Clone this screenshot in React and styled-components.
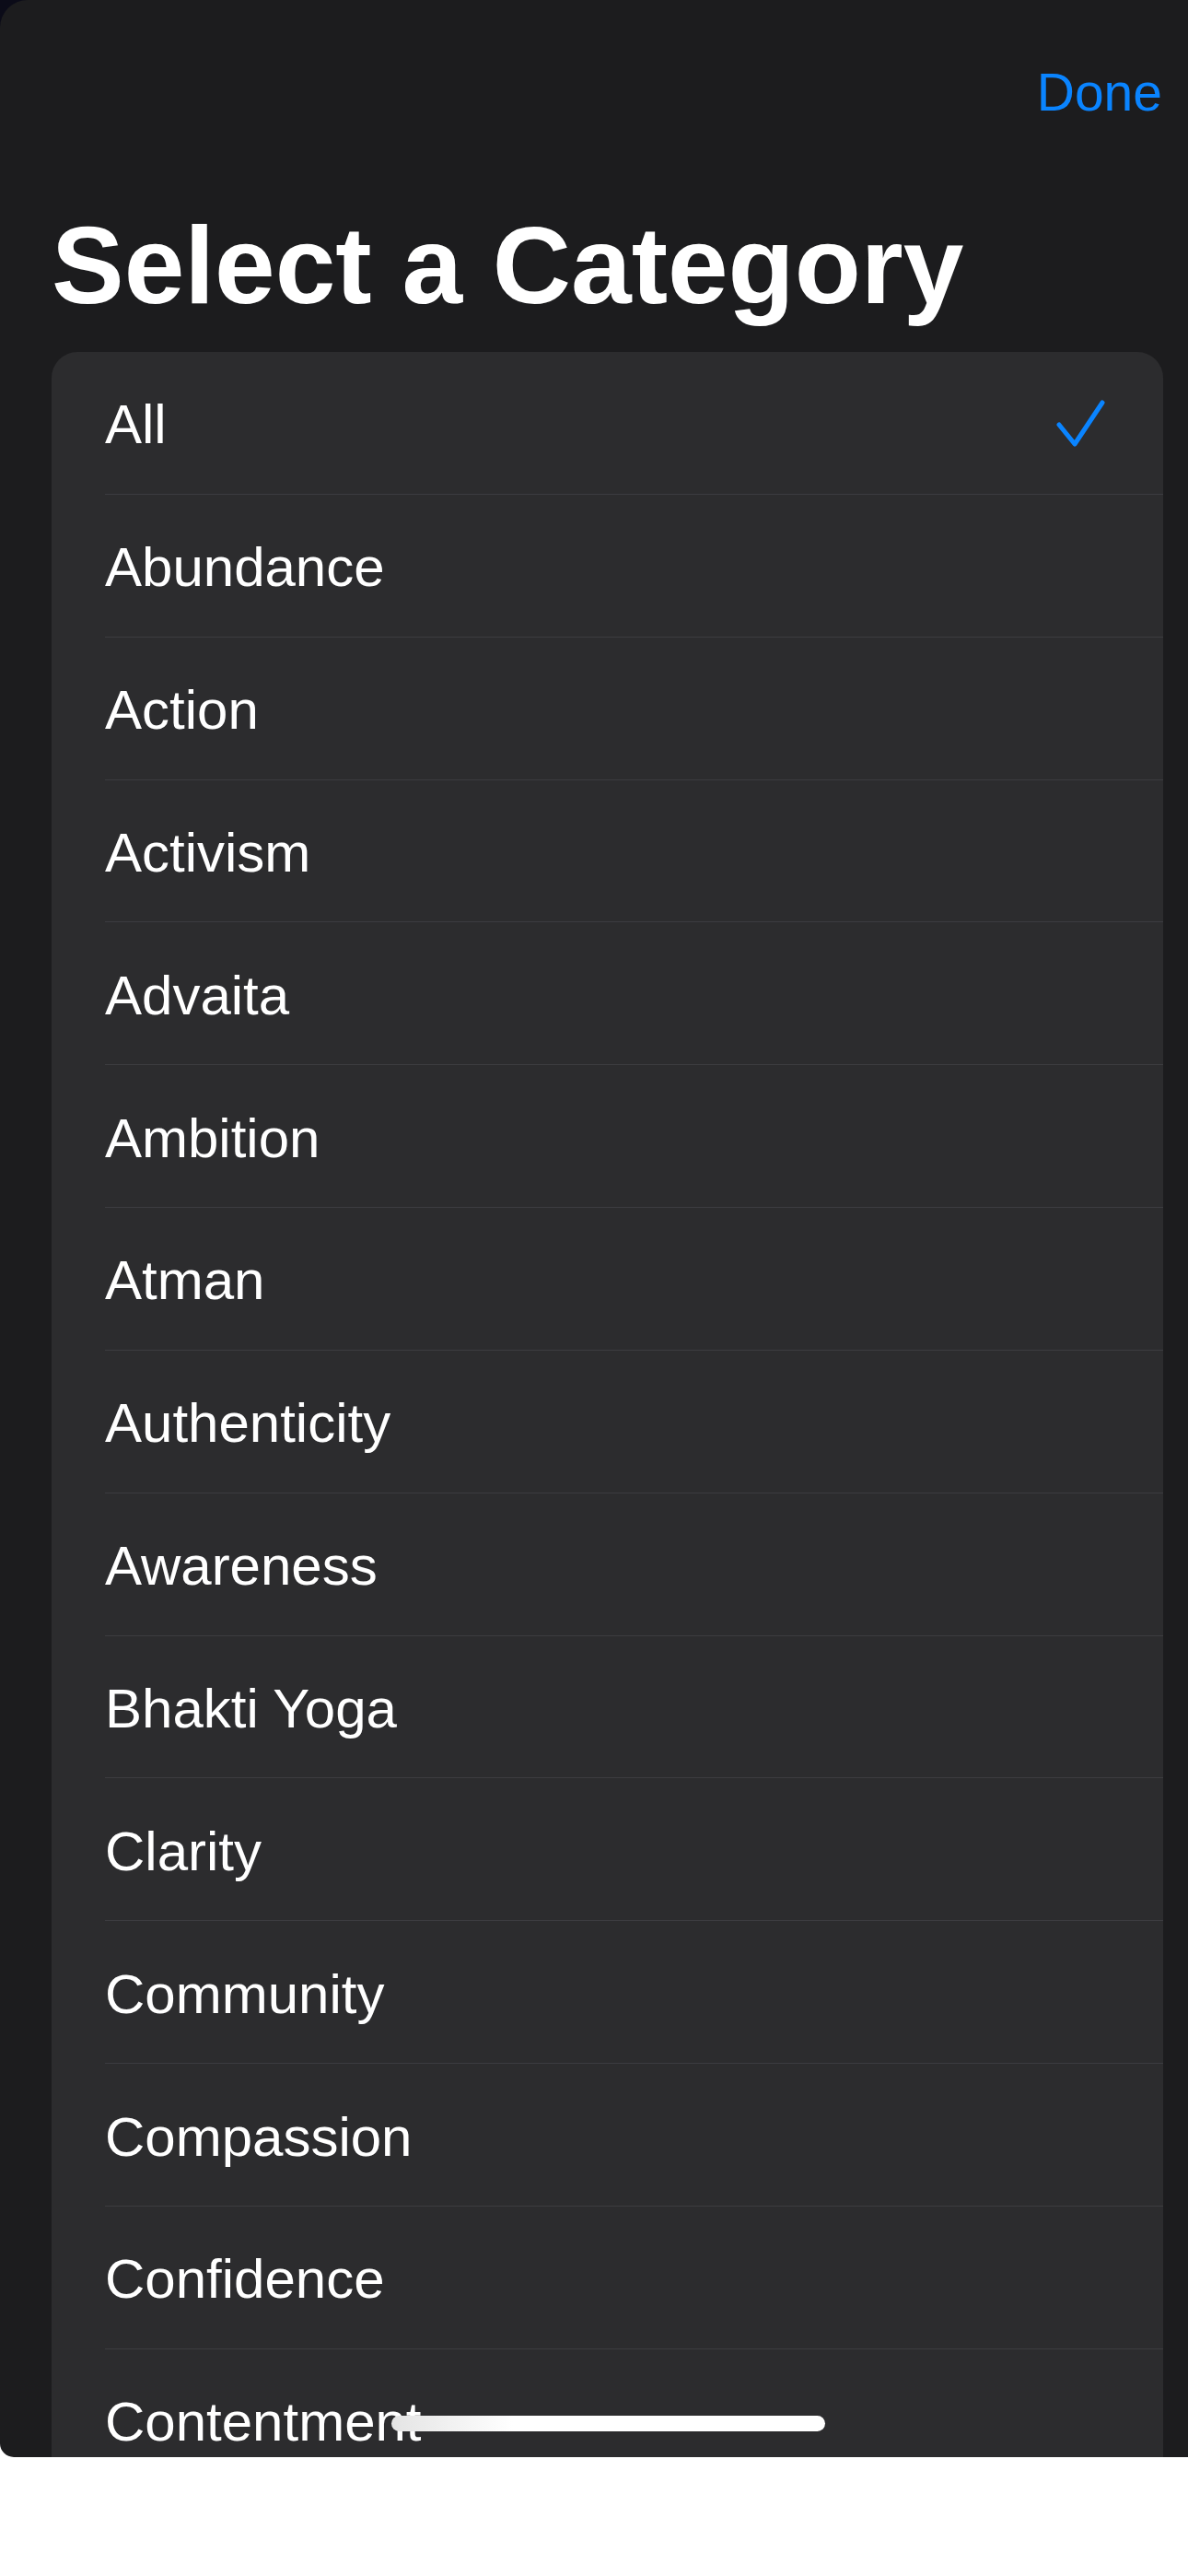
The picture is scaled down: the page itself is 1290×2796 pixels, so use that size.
import React from "react";
import styled, { createGlobalStyle } from "styled-components";

const Global = createGlobalStyle`
  html, body { margin: 0; padding: 0; background: #ffffff; }
  body { font-family: "Liberation Sans", Arial, sans-serif; }
`;

const Backdrop = styled.div`
  position: relative;
  width: 1290px;
  height: 2796px;
  background: linear-gradient(to bottom, #0b0b18 0, #0b0b18 120px, #ffffff 120px);
`;

const Sheet = styled.div`
  position: relative;
  height: 2667px;
  background: #1c1c1e;
  border-radius: 30px 0 0 15px;
  overflow: hidden;
  display: flex;
  flex-direction: column;
`;

const Header = styled.div`
  display: flex;
  justify-content: flex-end;
  padding: 72px 28px 0 0;
`;

const DoneButton = styled.button`
  background: none;
  border: none;
  padding: 0;
  font-family: "Liberation Sans", Arial, sans-serif;
  font-size: 57px;
  line-height: 57px;
  color: #0a84ff;
`;

const Title = styled.h1`
  margin: 100px 0 0 0;
  padding-left: 56px;
  font-family: "Liberation Sans", Arial, sans-serif;
  font-weight: 700;
  font-size: 118px;
  line-height: 118px;
  color: #ffffff;
  letter-spacing: 0;
`;

const Card = styled.div`
  margin: 35px 27px 0 56px;
  background: #2c2c2e;
  border-radius: 28px 28px 0 0;
  display: flex;
  flex-direction: column;
  flex: 1;
`;

const Row = styled.div`
  box-sizing: border-box;
  height: 154.85px;
  flex: none;
  margin-left: 58px;
  padding: 5px 62px 0 0;
  display: flex;
  align-items: center;
  justify-content: space-between;
  border-bottom: 1.5px solid #3c3c40;
`;

const Label = styled.span`
  font-family: "Liberation Sans", Arial, sans-serif;
  font-size: 60px;
  line-height: 60px;
  color: #ffffff;
`;

const Check = styled.svg`
  width: 54px;
  height: 54px;
  flex: none;
`;

const HomeIndicator = styled.div`
  position: absolute;
  left: 425px;
  top: 2622px;
  width: 471px;
  height: 17px;
  border-radius: 9px;
  background: linear-gradient(to right, #e4e4e4 0%, #ffffff 28%, #ffffff 100%);
`;

const categories = [
  "All",
  "Abundance",
  "Action",
  "Activism",
  "Advaita",
  "Ambition",
  "Atman",
  "Authenticity",
  "Awareness",
  "Bhakti Yoga",
  "Clarity",
  "Community",
  "Compassion",
  "Confidence",
  "Contentment",
];

export default function App() {
  const selected = "All";
  return (
    <>
      <Global />
      <Backdrop>
        <Sheet>
          <Header>
            <DoneButton>Done</DoneButton>
          </Header>
          <Title>Select a Category</Title>
          <Card>
            {categories.map((c) => (
              <Row key={c}>
                <Label>{c}</Label>
                {c === selected && (
                  <Check viewBox="0 0 54 54">
                    <path
                      d="M3 27 L20 48 L50 3"
                      fill="none"
                      stroke="#0a84ff"
                      strokeWidth="5"
                      strokeLinecap="round"
                      strokeLinejoin="round"
                    />
                  </Check>
                )}
              </Row>
            ))}
          </Card>
          <HomeIndicator />
        </Sheet>
      </Backdrop>
    </>
  );
}
